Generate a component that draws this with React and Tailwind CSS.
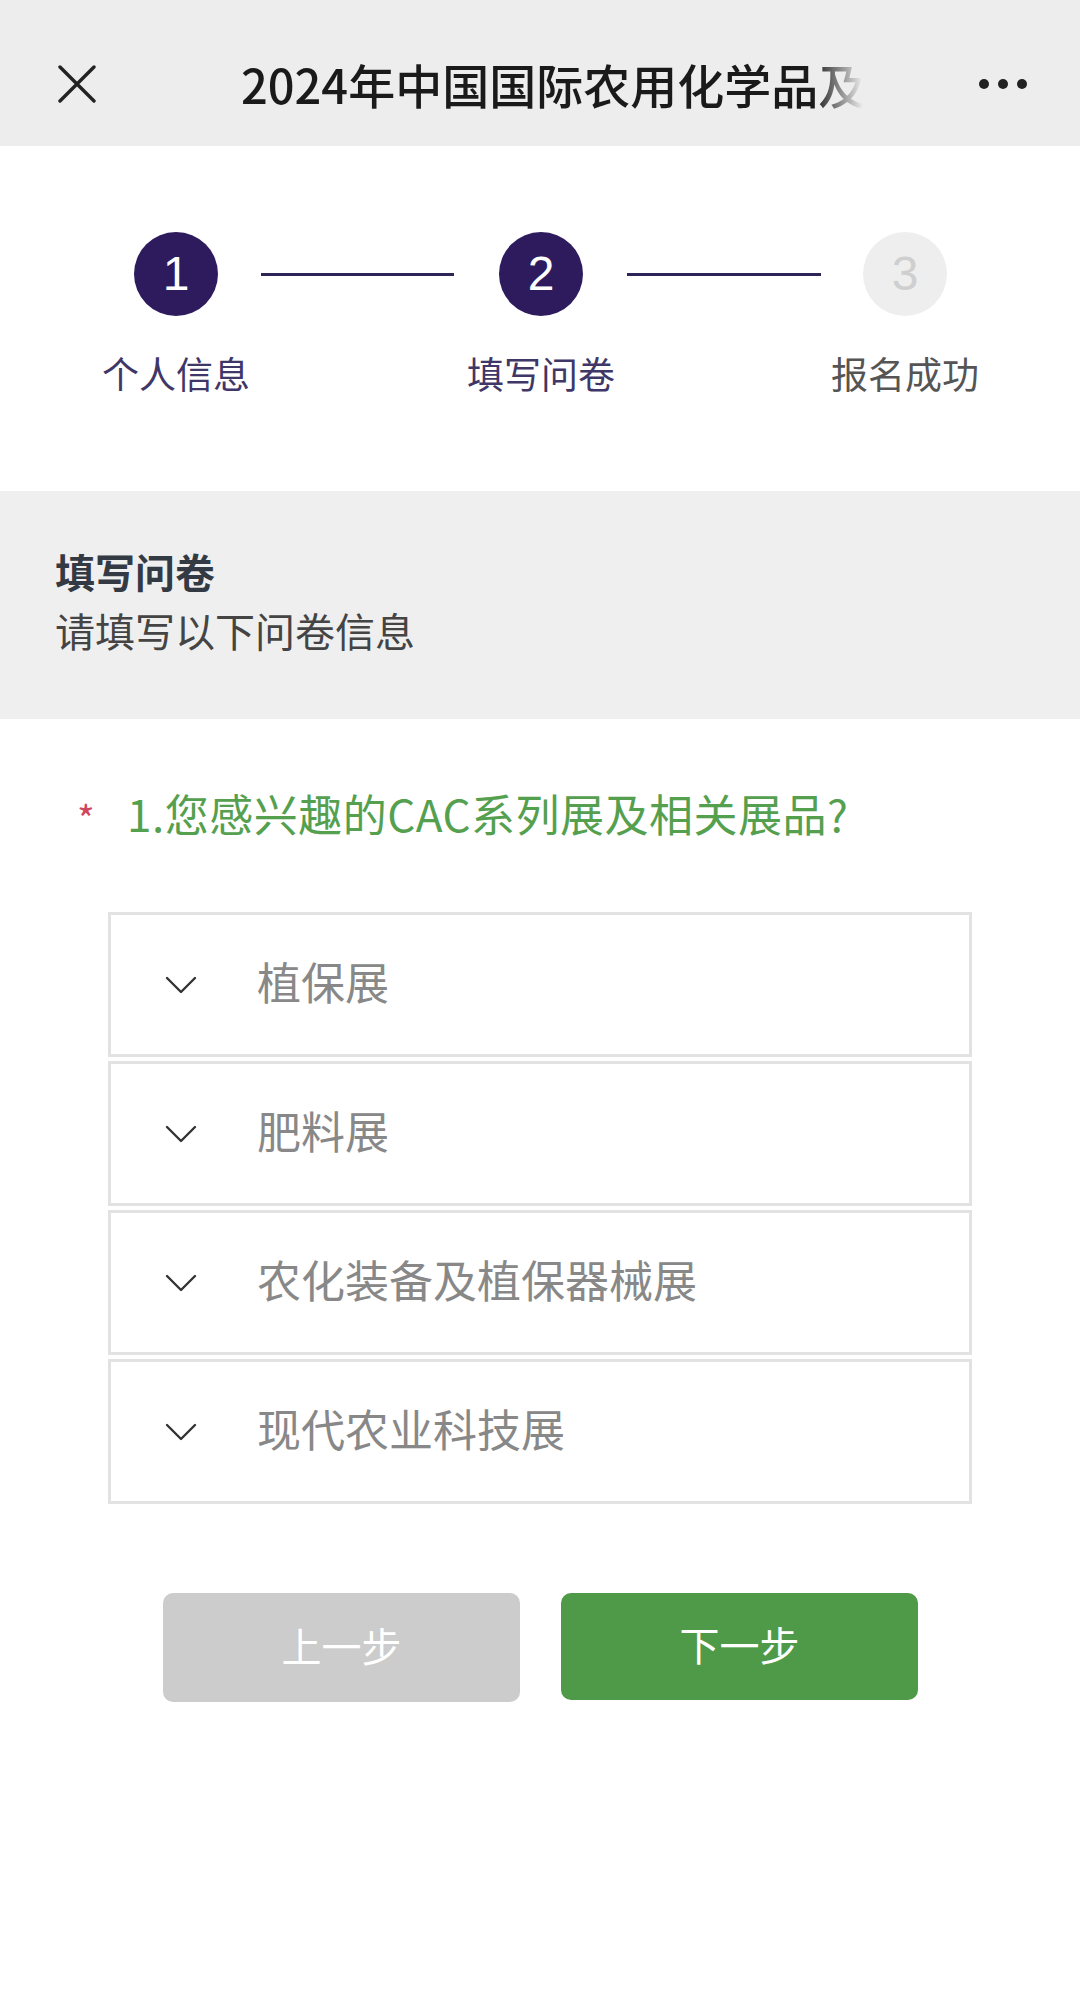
const FONT = { fontFamily: '"Noto Sans CJK SC", "Noto Sans", sans-serif' };

const steps = [
  { n: 1, label: "个人信息", done: true },
  { n: 2, label: "填写问卷", done: true },
  { n: 3, label: "报名成功", done: false },
];

const groups = ["植保展", "肥料展", "农化装备及植保器械展", "现代农业科技展"];

function Step({ step }) {
  return (
    <div className="flex flex-col items-center w-[84px]">
      <div
        className={
          step.done
            ? "w-[84px] h-[84px] rounded-full bg-[#2d1b5e] text-white flex items-center justify-center"
            : "w-[84px] h-[84px] rounded-full bg-[#eeeeee] text-[#cfcfcf] flex items-center justify-center"
        }
      >
        <span className="text-[48px] leading-none font-['Liberation_Sans',sans-serif]">
          {step.n}
        </span>
      </div>
      <div
        className={
          step.done
            ? "mt-[35px] whitespace-nowrap text-[37px] leading-[44px] text-[#3f3768]"
            : "mt-[35px] whitespace-nowrap text-[37px] leading-[44px] text-[#555555]"
        }
      >
        {step.label}
      </div>
    </div>
  );
}

function Chevron() {
  return (
    <svg width="32" height="20" viewBox="0 0 32 20" className="text-[#333] ml-[54px] shrink-0">
      <path d="M2 3 L16 17 L30 3" fill="none" stroke="currentColor" strokeWidth="2.4" strokeLinecap="round" strokeLinejoin="round" />
    </svg>
  );
}

export default function App() {
  return (
    <div className="min-h-[1989px] bg-white" style={FONT}>
      {/* 顶部栏 */}
      <header className="h-[146px] bg-[#ededed] flex items-center pt-[22px]">
        <div className="w-[241px] pl-[58px] flex items-center">
          <svg width="38" height="38" viewBox="0 0 38 38" className="text-[#222]">
            <path d="M2 2 L36 36 M36 2 L2 36" stroke="currentColor" strokeWidth="3.4" strokeLinecap="round" />
          </svg>
        </div>
        <div className="w-[622px] overflow-hidden whitespace-nowrap text-[47px] font-medium text-[#1a1a1a] leading-[60px] [mask-image:linear-gradient(to_right,black_92%,transparent)]">
          2024年中国国际农用化学品及植保展览会
        </div>
        <div className="flex-1 flex items-center justify-end pr-[53px] gap-[9px]">
          <span className="w-[10px] h-[10px] rounded-full bg-[#222]" />
          <span className="w-[10px] h-[10px] rounded-full bg-[#222]" />
          <span className="w-[10px] h-[10px] rounded-full bg-[#222]" />
        </div>
      </header>

      {/* 步骤条 */}
      <section className="pt-[86px] pb-[96px] pl-[134px] flex items-start">
        <Step step={steps[0]} />
        <div className="mt-[41px] ml-[43px] w-[193px] h-[3px] bg-[#2d2557]" />
        <div className="ml-[45px]">
          <Step step={steps[1]} />
        </div>
        <div className="mt-[41px] ml-[44px] w-[194px] h-[3px] bg-[#2d2557]" />
        <div className="ml-[42px]">
          <Step step={steps[2]} />
        </div>
      </section>

      {/* 说明 */}
      <section className="h-[228px] bg-[#efefef] px-[55px] pt-[54px]">
        <div className="text-[40px] leading-[52px] font-bold text-[#333a44]">填写问卷</div>
        <div className="mt-[7px] text-[40px] leading-[52px] text-[#444444]">请填写以下问卷信息</div>
      </section>

      {/* 问题 */}
      <section className="pt-[64px]">
        <div className="flex items-center pl-[77px] h-[60px]">
          <span className="w-[50px] text-[38px] leading-none text-[#d0455f] pt-[10px]">*</span>
          <span className="text-[44px] leading-[60px] tracking-[0.5px] text-[#55a04f]">
            1.您感兴趣的CAC系列展及相关展品?
          </span>
        </div>

        <div className="mt-[69px] mx-[108px] flex flex-col gap-[4px]">
          {groups.map((g) => (
            <div
              key={g}
              className="h-[145px] border-[3px] border-[#e2e2e2] flex items-center bg-white"
            >
              <Chevron />
              <span className="ml-[60px] pb-[8px] text-[44px] leading-none text-[#888888]">{g}</span>
            </div>
          ))}
        </div>

        <div className="mt-[89px] flex justify-center gap-[41px] pl-[1px]">
          <button className="w-[357px] h-[109px] pb-[6px] rounded-[10px] bg-[#cccccc] text-white text-[40px]">
            上一步
          </button>
          <button className="w-[357px] h-[107px] pb-[6px] rounded-[10px] bg-[#4f9a48] text-white text-[40px]">
            下一步
          </button>
        </div>
      </section>
    </div>
  );
}
